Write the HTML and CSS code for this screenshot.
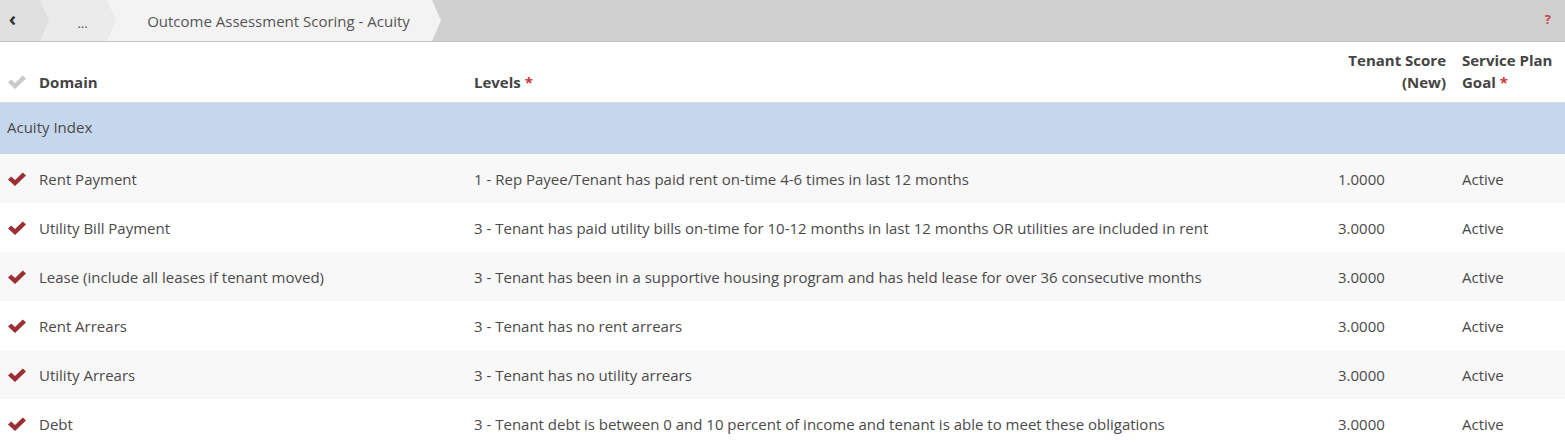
FILE: index.html
```html
<!DOCTYPE html>
<html>
<head>
<meta charset="utf-8">
<link rel="stylesheet" href="styles.css">
</head>
<body>
<div class="topbar">
  <div class="crumbs">
    <div class="crumb c1"><span class="back">&#8249;</span></div>
    <div class="crumb c2"><span class="dots">...</span></div>
    <div class="crumb c3"><span>Outcome Assessment Scoring - Acuity</span></div>
  </div>
  <div class="help">?</div>
</div>
<table class="grid">
  <colgroup>
    <col class="w-check"><col class="w-domain"><col class="w-levels"><col class="w-score"><col class="w-goal">
  </colgroup>
  <thead>
    <tr>
      <th class="chk"><svg class="ck" viewBox="0 0 18 14" width="18" height="14"><path d="M0 7.6 L3.2 4.6 L7 8.1 L14.8 0.6 L18 3.6 L7 14 Z" fill="#c9c9c9"/></svg></th>
      <th>Domain</th>
      <th>Levels <span class="req">*</span></th>
      <th class="num">Tenant Score<br>(New)</th>
      <th>Service Plan<br>Goal <span class="req">*</span></th>
    </tr>
  </thead>
  <tbody>
    <tr class="group"><td colspan="5">Acuity Index</td></tr>
    <tr class="odd">
      <td class="chk"><svg class="ck" viewBox="0 0 18 14" width="18" height="14"><path d="M0 7.6 L3.2 4.6 L7 8.1 L14.8 0.6 L18 3.6 L7 14 Z" fill="#9c2f33"/></svg></td>
      <td>Rent Payment</td>
      <td>1 - Rep Payee/Tenant has paid rent on-time 4-6 times in last 12 months</td>
      <td class="val">1.0000</td>
      <td>Active</td>
    </tr>
    <tr>
      <td class="chk"><svg class="ck" viewBox="0 0 18 14" width="18" height="14"><path d="M0 7.6 L3.2 4.6 L7 8.1 L14.8 0.6 L18 3.6 L7 14 Z" fill="#9c2f33"/></svg></td>
      <td>Utility Bill Payment</td>
      <td>3 - Tenant has paid utility bills on-time for 10-12 months in last 12 months OR utilities are included in rent</td>
      <td class="val">3.0000</td>
      <td>Active</td>
    </tr>
    <tr class="odd">
      <td class="chk"><svg class="ck" viewBox="0 0 18 14" width="18" height="14"><path d="M0 7.6 L3.2 4.6 L7 8.1 L14.8 0.6 L18 3.6 L7 14 Z" fill="#9c2f33"/></svg></td>
      <td>Lease (include all leases if tenant moved)</td>
      <td>3 - Tenant has been in a supportive housing program and has held lease for over 36 consecutive months</td>
      <td class="val">3.0000</td>
      <td>Active</td>
    </tr>
    <tr>
      <td class="chk"><svg class="ck" viewBox="0 0 18 14" width="18" height="14"><path d="M0 7.6 L3.2 4.6 L7 8.1 L14.8 0.6 L18 3.6 L7 14 Z" fill="#9c2f33"/></svg></td>
      <td>Rent Arrears</td>
      <td>3 - Tenant has no rent arrears</td>
      <td class="val">3.0000</td>
      <td>Active</td>
    </tr>
    <tr class="odd">
      <td class="chk"><svg class="ck" viewBox="0 0 18 14" width="18" height="14"><path d="M0 7.6 L3.2 4.6 L7 8.1 L14.8 0.6 L18 3.6 L7 14 Z" fill="#9c2f33"/></svg></td>
      <td>Utility Arrears</td>
      <td>3 - Tenant has no utility arrears</td>
      <td class="val">3.0000</td>
      <td>Active</td>
    </tr>
    <tr>
      <td class="chk"><svg class="ck" viewBox="0 0 18 14" width="18" height="14"><path d="M0 7.6 L3.2 4.6 L7 8.1 L14.8 0.6 L18 3.6 L7 14 Z" fill="#9c2f33"/></svg></td>
      <td>Debt</td>
      <td>3 - Tenant debt is between 0 and 10 percent of income and tenant is able to meet these obligations</td>
      <td class="val">3.0000</td>
      <td>Active</td>
    </tr>
  </tbody>
</table>
</body>
</html>
```

FILE: styles.css
```css
* { box-sizing: border-box; }
html, body { margin: 0; padding: 0; background: #fff; }
body {
  font-family: "Open Sans", "Noto Sans", sans-serif;
  font-size: 15px;
  color: #4a4a4a;
  overflow: hidden;
}
.topbar {
  height: 42px;
  background: #d0d0d0;
  border-bottom: 1px solid #c4c4c4;
  display: flex;
  justify-content: space-between;
  align-items: stretch;
}
.crumbs { display: flex; height: 41px; }
.crumb {
  position: relative;
  display: flex;
  align-items: center;
  justify-content: center;
  height: 41px;
  clip-path: polygon(0 0, calc(100% - 9px) 0, 100% 50%, calc(100% - 9px) 100%, 0 100%);
}
.crumb + .crumb { margin-left: -9px; }
.c1 { width: 49px; background: #e0e0e0; z-index: 3; padding-right: 24px; }
.c2 { width: 76px; background: #ebebeb; z-index: 2; padding-left: 9px; }
.c3 { width: 334px; background: #f3f3f3; z-index: 1; padding-left: 9px; color: #555; }
.back { font-weight: 700; font-size: 20px; color: #333; line-height: 1; margin-top: -4px; }
.dots { font-size: 13px; color: #555; margin-top: 4px; }
.help {
  color: #c94545;
  font-weight: 700;
  font-size: 13px;
  padding: 10px 14px 0 0;
}
.grid {
  width: 100%;
  border-collapse: collapse;
  table-layout: fixed;
}
.w-check { width: 31px; }
.w-domain { width: 435px; }
.w-levels { width: auto; }
.w-score { width: 124px; }
.w-goal { width: 111px; }
th {
  height: 60px;
  text-align: left;
  vertical-align: bottom;
  font-weight: 700;
  color: #444;
  padding: 0 8px 9px 8px;
  line-height: 22px;
  border-bottom: 1px solid #dcdcdc;
  background: #fff;
  white-space: nowrap;
}
th.num { text-align: right; }
.req { color: #d1343f; }
td {
  height: 49px;
  padding: 0 8px;
  vertical-align: middle;
  white-space: nowrap;
  overflow: hidden;
}
td.chk, th.chk { padding: 0 0 0 8px; }
th.chk { padding-bottom: 13px; }
.ck { display: block; }
tr.group td {
  background: #c5d7ec;
  height: 52px;
  padding-left: 7px;
  padding-bottom: 3px;
  color: #4a4a4a;
}
tr.odd td { background: #f8f8f8; }
td.val { text-align: right; padding-right: 70px; }
```
